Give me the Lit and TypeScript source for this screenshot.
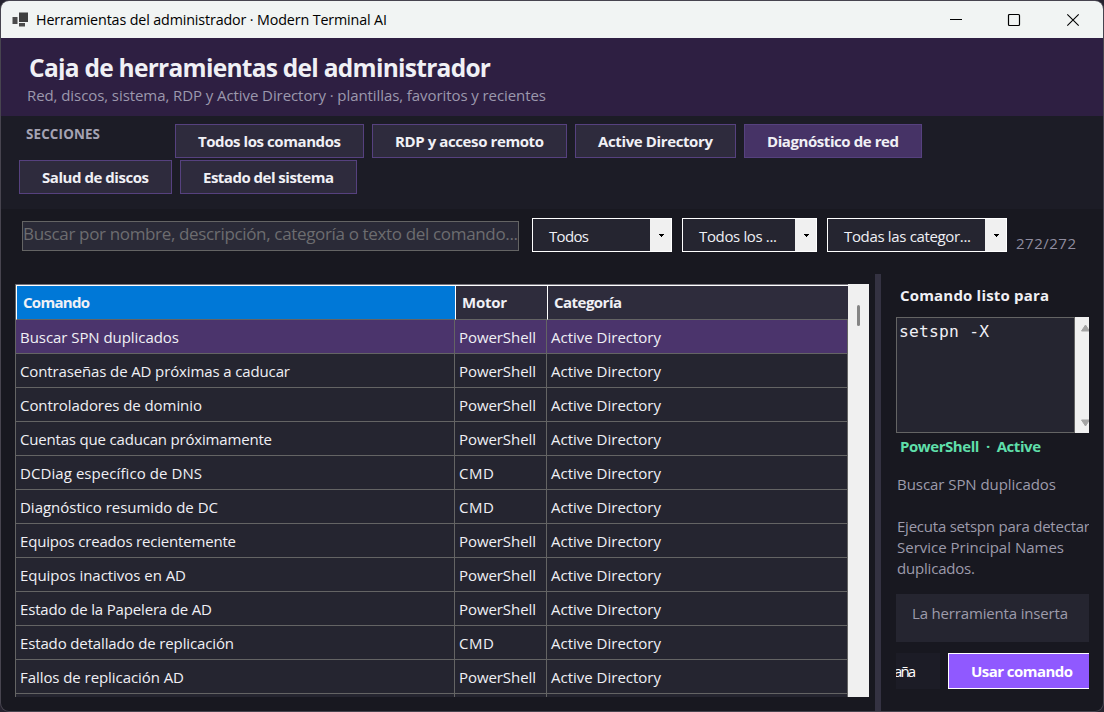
import { LitElement, html, css, svg } from "lit";
import { customElement, property } from "lit/decorators.js";
import { classMap } from "lit/directives/class-map.js";

/** Single line of text whose tracking is adjusted so that it spans `w` pixels. */
@customElement("fit-text")
class FitText extends LitElement {
  @property({ type: Number }) w = 0;
  @property() text = "";

  static styles = css`
    :host { display: inline-block; white-space: pre; flex: none; }
    .run { display: inline-block; }
  `;

  updated() {
    const run = this.renderRoot.querySelector(".run") as HTMLElement;
    run.style.letterSpacing = "0px";
    const natural = run.getBoundingClientRect().width;
    const gap = (this.w - natural) / Math.max(1, this.text.length - 1);
    run.style.letterSpacing = gap.toFixed(4) + "px";
    this.style.width = this.w + "px";
  }

  render() {
    return html`<span class="run">${this.text}</span>`;
  }
}

const t = (text: string, w: number) => html`<fit-text .text=${text} .w=${w}></fit-text>`;

type Row = [string, number, string];
const ROWS: Row[] = [
  ["Buscar SPN duplicados", 159, "PowerShell"],
  ["Contraseñas de AD próximas a caducar", 270, "PowerShell"],
  ["Controladores de dominio", 182, "PowerShell"],
  ["Cuentas que caducan próximamente", 252, "PowerShell"],
  ["DCDiag específico de DNS", 182, "CMD"],
  ["Diagnóstico resumido de DC", 198, "CMD"],
  ["Equipos creados recientemente", 216, "PowerShell"],
  ["Equipos inactivos en AD", 166, "PowerShell"],
  ["Estado de la Papelera de AD", 192, "PowerShell"],
  ["Estado detallado de replicación", 214, "CMD"],
  ["Fallos de replicación AD", 164, "PowerShell"],
];

@customElement("app-root")
class AppRoot extends LitElement {
  static styles = css`
    :host {
      display: block; width: 1104px; height: 712px; overflow: hidden;
      background: #26232f; font-family: "Open Sans", "Noto Sans", sans-serif;
      font-size: 15px; color: #f0f0f5; box-sizing: border-box; padding: 1px;
    }
    * { box-sizing: border-box; }
    .window {
      height: 710px; background: #181820; border-radius: 8px; overflow: hidden;
      display: flex; flex-direction: column; box-shadow: 0 0 0 1px #47444f;
    }
    .titlebar {
      height: 37px; background: #f1f4f3; color: #000; display: flex; align-items: center;
      padding: 0 23px 0 11px; font-size: 14.3px; flex: none;
    }
    .titlebar .name { margin-left: 7px; flex: 1; line-height: 36px; }
    .caps { display: flex; gap: 44px; }
    .caps .x { margin-left: 1px; }
    svg { display: block; flex: none; }

    .head { height: 78px; background: #2e1f42; padding: 13px 0 0 27px; flex: none; }
    .head .h1 { font-size: 24.5px; font-weight: 700; line-height: 34px; height: 29px; padding-left: 1px; overflow: hidden; }
    .head .sub { line-height: 28px; margin-top: 1px; margin-left: -1px; color: #9c98ad; }

    .sections { height: 93px; background: #1c1c26; padding: 8px 0 0 18px; flex: none; display: flex; flex-direction: column; gap: 2px; }
    .line { display: flex; gap: 8px; }
    .label { width: 148px; padding-left: 7px; font-size: 13.4px; font-weight: 700; color: #a5a3b3; line-height: 21px; }
    .tab {
      height: 34px; border: 1px solid #56417f; background: #2e2b3d; font-weight: 700;
      line-height: 32px; padding: 0 22px; white-space: nowrap;
    }
    .tab.on { background: #463366; }

    .filters { height: 65px; padding: 9px 0 0 21px; display: flex; align-items: flex-start; flex: none; }
    .search {
      width: 497px; height: 30px; margin: 3px 13px 0 0; border: 1px solid #646464; background: #2a2a37;
      color: #6d6d70; font-size: 17px; line-height: 24px; overflow: hidden;
    }
    .combo { height: 34px; border: 1px solid #fff; background: #252530; display: flex; margin-right: 10px; line-height: 35px; }
    .combo .val { flex: 1; padding-left: 16px; }
    .combo .drop { width: 21px; background: #f0f0f0; display: flex; align-items: center; justify-content: center; padding-left: 2px; }
    .c1 { width: 140px; } .c2 { width: 135px; } .c3 { width: 180px; margin-right: 9px; }
    .count { color: #8f8c9f; line-height: 21px; padding-top: 15px; }

    .main { flex: 1; display: flex; min-height: 0; }
    .gridwrap { width: 854px; height: 413px; margin: 10px 6px 0 14px; display: flex; flex: none; }
    .table { width: 833px; border-left: 1px solid #646464; overflow: hidden; background: #252530; }
    .r { display: grid; grid-template-columns: 439px 92px 301px; height: 34px; line-height: 35px; }
    .r > div { border-right: 1px solid #646464; border-bottom: 1px solid #646464; padding-left: 4px; overflow: hidden; }
    .r.sel > div { background: #4b346c; }
    .r.hd { height: 36px; border-top: 1px solid #77757d; font-weight: 700; line-height: 33px; }
    .r.hd > div { background: #2e2c3c; border-top: 1px solid #fff; border-right: 0; padding-left: 6px; }
    .r.hd > .cur { background: #0078d7; border-left: 1px solid #fff; }
    .r.hd > .mid { border-left: 1px solid #fff; }
    .bar { width: 21px; background: #f0f0f0; padding: 21px 0 0 9px; }
    .thumb { width: 3px; height: 21px; background: #858585; border-radius: 2px; }

    .split { width: 6px; background: #343242; flex: none; }
    .side { width: 193px; margin-left: 15px; overflow: hidden; display: flex; flex-direction: column; flex: none; }
    .side .st { font-weight: 700; padding: 10px 0 0 4px; line-height: 22px; height: 43px; }
    .code { height: 116px; display: flex; flex: none; }
    .code .txt {
      flex: 1; background: #252530; border: 1px solid #646464; padding: 3px 0 0 2px; line-height: 22px;
      font-family: "DejaVu Sans Mono", monospace; font-size: 16.3px;
    }
    .code .sb { width: 14px; background: #f0f0f0; overflow: hidden; display: flex; flex-direction: column; justify-content: space-between; padding: 7px 0 6px 5px; }
    .status { color: #5fdfaa; font-weight: 700; line-height: 24px; padding: 1px 0 0 4px; height: 41px; white-space: pre; }
    .desc { color: #9d9bab; line-height: 21px; height: 120px; display: flex; flex-direction: column; flex: none; padding-left: 1px; }
    .desc .gap { height: 21px; }
    .note { height: 48px; background: #252530; color: #9d9bab; padding: 9px 0 0 16px; line-height: 21px; flex: none; }
    .acts { display: flex; margin-top: 11px; height: 36px; gap: 8px; flex: none; }
    .copy { width: 44px; background: #1c1c26; line-height: 37px; overflow: hidden; display: flex; justify-content: flex-end; padding-right: 24px; color: #fff; }
    .use { width: 141px; background: #9059ff; border: 1px solid #fff; border-right: 0; font-weight: 700; line-height: 35px; padding-left: 22px; color: #fff; }
  `;

  private combo(cls: string, text: string, w: number) {
    return html`<div class="combo ${cls}">
      <div class="val">${t(text, w)}</div>
      <div class="drop"><svg width="5" height="3" viewBox="0 0 5 3" shape-rendering="crispEdges"><path d="M0 0h5v1h-1v1h-1v1h-1v-1h-1v-1h-1z" fill="#000" /></svg></div>
    </div>`;
  }

  private tab(text: string, w: number, on = false) {
    return html`<div class=${classMap({ tab: true, on })}>${t(text, w)}</div>`;
  }

  private row([name, w, engine]: Row, i: number) {
    return html`<div class=${classMap({ r: true, sel: i === 0 })}>
      <div>${t(name, w)}</div>
      <div>${t(engine, engine === "CMD" ? 35 : 77)}</div>
      <div>${t("Active Directory", 110)}</div>
    </div>`;
  }

  render() {
    return html`<div class="window">
      <div class="titlebar">
        <svg width="17" height="16" viewBox="0 0 17 16">
          <rect x="0.5" y="5" width="5" height="7" fill="#4b4b4b" />
          <rect x="7" y="0.5" width="9" height="9.5" fill="#3f3f3f" />
          <rect x="7" y="11" width="6" height="3.5" fill="#4b4b4b" />
        </svg>
        <div class="name">${t("Herramientas del administrador · Modern Terminal AI", 351)}</div>
        <div class="caps">
          <svg width="14" height="14" viewBox="0 0 14 14"><path d="M1 6.5h12" stroke="#000" /></svg>
          <svg width="14" height="14" viewBox="0 0 14 14"><rect x="1.5" y="1.5" width="11" height="11" rx="1" fill="none" stroke="#000" stroke-width="1.2" /></svg>
          <svg class="x" width="14" height="14" viewBox="0 0 14 14"><path d="M1.3 1.3l11.4 11.4M12.7 1.3L1.3 12.7" stroke="#000" stroke-width="1.1" /></svg>
        </div>
      </div>
      <div class="head">
        <div class="h1">${t("Caja de herramientas del administrador", 462)}</div>
        <div class="sub">${t("Red, discos, sistema, RDP y Active Directory · plantillas, favoritos y recientes", 519)}</div>
      </div>
      <div class="sections">
        <div class="line">
          <div class="label">${t("SECCIONES", 74)}</div>
          ${this.tab("Todos los comandos", 143)} ${this.tab("RDP y acceso remoto", 149)}
          ${this.tab("Active Directory", 115)} ${this.tab("Diagnóstico de red", 132, true)}
        </div>
        <div class="line">${this.tab("Salud de discos", 107)} ${this.tab("Estado del sistema", 131)}</div>
      </div>
      <div class="filters">
        <div class="search">${t("Buscar por nombre, descripción, categoría o texto del comando...", 495)}</div>
        ${this.combo("c1", "Todos", 40)} ${this.combo("c2", "Todos los ...", 78)}
        ${this.combo("c3", "Todas las categor...", 127)}
        <div class="count">${t("272/272", 60)}</div>
      </div>
      <div class="main">
        <div class="gridwrap">
          <div class="table">
            <div class="r hd">
              <div class="cur">${t("Comando", 67)}</div>
              <div class="mid">${t("Motor", 45)}</div>
              <div class="mid">${t("Categoría", 68)}</div>
            </div>
            ${ROWS.map((r, i) => this.row(r, i))}
            <div class="r"><div></div><div></div><div></div></div>
          </div>
          <div class="bar"><div class="thumb"></div></div>
        </div>
        <div class="split"></div>
        <div class="side">
          <div class="st">${t("Comando listo para", 149)}</div>
          <div class="code">
            <div class="txt">${t("setspn -X", 90)}</div>
            <div class="sb">
              <svg width="10" height="8" viewBox="0 0 10 8">${svg`<path d="M1.5 7L5.5 1l4 6z" fill="#a3a3a3" stroke="#a3a3a3" stroke-linejoin="round"/>`}</svg>
              <svg width="10" height="8" viewBox="0 0 10 8">${svg`<path d="M1.5 1l4 6 4-6z" fill="#a3a3a3" stroke="#a3a3a3" stroke-linejoin="round"/>`}</svg>
            </div>
          </div>
          <div class="status">${t("PowerShell  ·  Active", 141)}</div>
          <div class="desc">
            ${t("Buscar SPN duplicados", 159)}
            <div class="gap"></div>
            ${t("Ejecuta setspn para detectar", 193)}
            ${t("Service Principal Names", 167)}
            ${t("duplicados.", 78)}
          </div>
          <div class="note">${t("La herramienta inserta", 156)}</div>
          <div class="acts">
            <div class="copy">${t("aña", 22)}</div>
            <div class="use">${t("Usar comando", 102)}</div>
          </div>
        </div>
      </div>
    </div>`;
  }
}
